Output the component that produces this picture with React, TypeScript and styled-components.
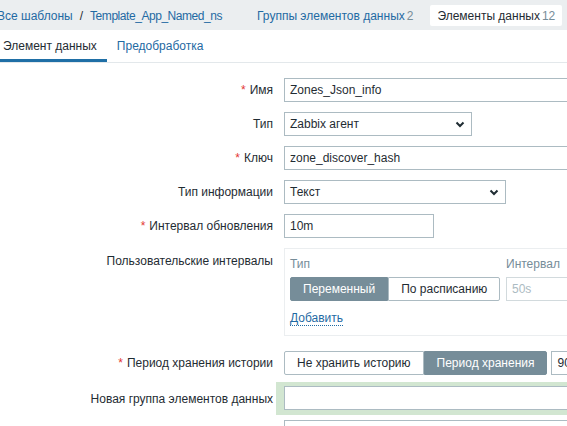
import styled, { createGlobalStyle } from "styled-components";

const GlobalStyle = createGlobalStyle`
   html, body {
      margin: 0;
      background: #ffffff;
      overflow: hidden;
   }
   body {
      font-family: "Liberation Sans", Arial, sans-serif;
      font-size: 12px;
      color: #1f2c33;
   }
`;

const Page = styled.div`
   width: 900px;
   margin-left: -7px;
`;

const TopNav = styled.div`
   height: 30px;
   background-color: #ebeef0;
   display: flex;
   align-items: center;
   padding-left: 4px;
   padding-top: 1px;
   box-sizing: border-box;
`;

const Crumb = styled.a<{ $tight?: boolean }>`
   color: #1f6aa3;
   text-decoration: none;
   line-height: 14px;
   letter-spacing: ${({ $tight }) => ($tight ? "-0.45px" : "0")};
`;

const Slash = styled.span`
   margin: 0 7px 0 7px;
   color: #1f2c33;
`;

const NavTab = styled.div<{ $active?: boolean }>`
   display: flex;
   align-items: center;
   height: 21px;
   padding: 0 7px;
   margin-left: ${({ $active }) => ($active ? "10px" : "28px")};
   border-radius: 2px;
   background-color: ${({ $active }) => ($active ? "#ffffff" : "transparent")};
   color: ${({ $active }) => ($active ? "#1f2c33" : "#1f6aa3")};
   white-space: nowrap;
`;

const Count = styled.span`
   color: #768d99;
   margin-left: 2px;
`;

const TabBar = styled.div`
   display: flex;
   height: 32px;
   border-bottom: 1px solid #e3e8eb;
`;

const Tab = styled.div<{ $active?: boolean }>`
   display: flex;
   align-items: center;
   padding: 0 10px;
   box-sizing: border-box;
   border-bottom: 3px solid ${({ $active }) => ($active ? "#1f6fa6" : "transparent")};
   padding-top: 3px;
   color: ${({ $active }) => ($active ? "#1f2c33" : "#1f6aa3")};
`;

const Form = styled.div`
   display: flex;
   flex-direction: column;
   padding-top: 15px;
`;

const Row = styled.div<{ $top?: number; $alignTop?: boolean }>`
   display: grid;
   grid-template-columns: 280px 1fr;
   column-gap: 11px;
   align-items: ${({ $alignTop }) => ($alignTop ? "start" : "center")};
   margin-top: ${({ $top }) => $top ?? 10}px;
`;

const Label = styled.label<{ $pad?: number }>`
   text-align: right;
   line-height: 14px;
   padding-top: ${({ $pad }) => $pad ?? 0}px;
   white-space: nowrap;
`;

const Asterisk = styled.span`
   color: #e33734;
   margin-right: 4px;
`;

const TextInput = styled.div<{ $width: number; $muted?: boolean }>`
   width: ${({ $width }) => $width}px;
   height: 24px;
   box-sizing: border-box;
   border: 1px solid ${({ $muted }) => ($muted ? "#d2dadd" : "#acbbc2")};
   background: #ffffff;
   padding: 0 5px;
   display: flex;
   align-items: center;
   color: ${({ $muted }) => ($muted ? "#acbbc2" : "#1f2c33")};
`;

const Select = styled.div<{ $width: number }>`
   width: ${({ $width }) => $width}px;
   height: 24px;
   box-sizing: border-box;
   border: 1px solid #acbbc2;
   padding: 0 5px;
   display: flex;
   align-items: center;
   justify-content: space-between;
   svg {
      margin-right: 1px;
   }
`;

const Chevron = () => (
   <svg width="10" height="7" viewBox="0 0 10 7">
      <polyline
         points="1.5,1.5 5,5 8.5,1.5"
         fill="none"
         stroke="#1f2c33"
         strokeWidth="2"
      />
   </svg>
);

const IntervalBox = styled.div`
   width: 560px;
   box-sizing: border-box;
   border: 1px solid #ebeef0;
   padding: 5px 5px 9px;
`;

const IntervalTable = styled.div`
   display: grid;
   grid-template-columns: 212px 160px;
   column-gap: 4px;
   row-gap: 4px;
   align-items: center;
`;

const ColHead = styled.div`
   color: #768d99;
   line-height: 18px;
   margin-top: 1px;
`;

const Segmented = styled.div`
   display: flex;
   height: 24px;
`;

const SegButton = styled.div<{ $active?: boolean }>`
   display: flex;
   align-items: center;
   padding: 0 12px;
   box-sizing: border-box;
   border: 1px solid ${({ $active }) => ($active ? "#768d99" : "#acbbc2")};
   background-color: ${({ $active }) => ($active ? "#768d99" : "#ffffff")};
   color: ${({ $active }) => ($active ? "#ffffff" : "#1f2c33")};
   white-space: nowrap;
   &:first-child {
      border-radius: 2px 0 0 2px;
   }
   &:last-child {
      border-radius: 0 2px 2px 0;
   }
`;

const AddLink = styled.a`
   display: inline-block;
   margin-top: 10px;
   color: #1f6aa3;
   line-height: 14px;
   text-decoration: none;
   border-bottom: 1px dotted #1f6aa3;
`;

const Inline = styled.div`
   display: flex;
   align-items: center;
   gap: 4px;
`;

const Highlight = styled.div`
   margin-left: -8px;
   padding: 4px 0 5px 8px;
   background-color: #d2e6d1;
`;

const ListBox = styled.div`
   width: 453px;
   height: 120px;
   box-sizing: border-box;
   border: 1px solid #acbbc2;
`;

function App() {
   return (
      <Page>
         <GlobalStyle />
         <TopNav>
            <Crumb>Все шаблоны</Crumb>
            <Slash>/</Slash>
            <Crumb $tight>Template_App_Named_ns</Crumb>
            <NavTab>
               Группы элементов данных<Count>2</Count>
            </NavTab>
            <NavTab $active>
               Элементы данных<Count>12</Count>
            </NavTab>
         </TopNav>

         <TabBar>
            <Tab $active>Элемент данных</Tab>
            <Tab>Предобработка</Tab>
         </TabBar>

         <Form>
            <Row $top={0}>
               <Label>
                  <Asterisk>*</Asterisk>Имя
               </Label>
               <TextInput $width={453}>Zones_Json_info</TextInput>
            </Row>
            <Row>
               <Label>Тип</Label>
               <Select $width={188}>
                  Zabbix агент
                  <Chevron />
               </Select>
            </Row>
            <Row>
               <Label>
                  <Asterisk>*</Asterisk>Ключ
               </Label>
               <TextInput $width={453}>zone_discover_hash</TextInput>
            </Row>
            <Row>
               <Label>Тип информации</Label>
               <Select $width={222}>
                  Текст
                  <Chevron />
               </Select>
            </Row>
            <Row>
               <Label>
                  <Asterisk>*</Asterisk>Интервал обновления
               </Label>
               <TextInput $width={150}>10m</TextInput>
            </Row>
            <Row $alignTop>
               <Label $pad={6}>Пользовательские интервалы</Label>
               <IntervalBox>
                  <IntervalTable>
                     <ColHead>Тип</ColHead>
                     <ColHead>Интервал</ColHead>
                     <Segmented>
                        <SegButton $active>Переменный</SegButton>
                        <SegButton>По расписанию</SegButton>
                     </Segmented>
                     <TextInput $width={160} $muted>
                        50s
                     </TextInput>
                  </IntervalTable>
                  <AddLink>Добавить</AddLink>
               </IntervalBox>
            </Row>
            <Row $top={15}>
               <Label>
                  <Asterisk>*</Asterisk>Период хранения истории
               </Label>
               <Inline>
                  <Segmented>
                     <SegButton>Не хранить историю</SegButton>
                     <SegButton $active>Период хранения</SegButton>
                  </Segmented>
                  <TextInput $width={150}>90d</TextInput>
               </Inline>
            </Row>
            <Row $top={7}>
               <Label>Новая группа элементов данных</Label>
               <Highlight>
                  <TextInput $width={453} />
               </Highlight>
            </Row>
            <Row $top={5} $alignTop>
               <Label $pad={6}>Группы элементов данных</Label>
               <ListBox />
            </Row>
         </Form>
      </Page>
   );
}

export default App;
